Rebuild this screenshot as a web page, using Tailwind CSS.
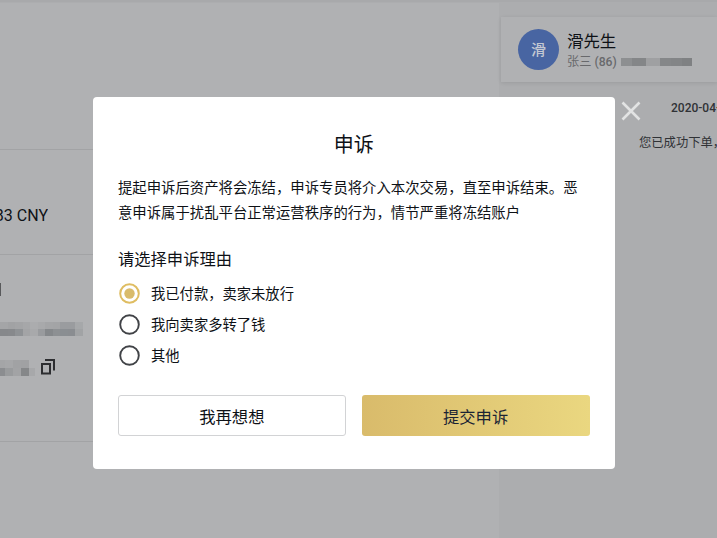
<!DOCTYPE html>
<html lang="zh-CN">
<head>
    <meta charset="UTF-8">
    <meta name="viewport" content="width=device-width, initial-scale=1.0">
    <title>申诉</title>
    <script src="https://cdn.jsdelivr.net/npm/@tailwindcss/browser@4"></script>
    <style>
        body { font-family: Roboto, 'Noto Sans CJK SC', sans-serif; }
    </style>
</head>
<body class="relative w-[717px] h-[538px] overflow-hidden bg-[#b0b1b3] text-[#0e1116]">

    <div class="flex flex-col h-full">
        <div class="h-[3px] shrink-0 bg-[#a8a9ab] border-b border-[#acadaf]"></div>
        <div class="flex flex-1">
            <!-- 订单信息 -->
            <main class="w-[499px] shrink-0">
                <div class="h-[147px] border-b border-[#a2a3a5]"></div>
                <div class="h-[105px] border-b border-[#a2a3a5] flex pt-[54px]">
                    <div class="w-[48px] h-6 flex justify-end text-[16px] leading-6 whitespace-nowrap overflow-hidden">83 CNY</div>
                </div>
                <div class="h-[187px] border-b border-[#a2a3a5] flex flex-col">
                    <div class="mt-[28px] w-px h-[13px] bg-[#58595b]"></div>
                    <div id="account" class="mt-[26px] grid grid-cols-[repeat(11,7.5px)] w-[83px] h-[14px]"></div>
                    <div class="mt-[21px] flex items-start">
                        <div id="card" class="mt-[3px] grid grid-cols-[5px_8px_8px_8px_6px] w-[39px] h-[16px]"></div>
                        <svg width="17" height="18" viewBox="0 0 17 18" fill="none" stroke="#2d2e31" stroke-width="2">
                            <path d="M3 7h8v9.500H3zM6 3h9v10.500"/>
                        </svg>
                    </div>
                </div>
            </main>

            <!-- 聊天 -->
            <aside class="flex-1 min-w-0 bg-[#acadaf] pt-[14px]">
                <div class="ml-[2px] h-[65px] bg-[#b0b1b3] shadow-[0_1px_4px_rgba(0,0,0,0.1)] flex items-center pl-[17px]">
                    <div class="w-[41px] h-[41px] shrink-0 rounded-full bg-[#4865a2] text-[#c3c8d2] text-[15px] font-medium flex items-center justify-center pt-[2px]">滑</div>
                    <div class="ml-[8px] pt-[4px] whitespace-nowrap">
                        <div class="text-[16.4px] leading-[21px]">滑先生</div>
                        <div class="flex items-center text-[12.2px] leading-[20px] text-[#68696c]">
                            <span>张三 <b class="font-medium">(86)</b></span>
                            <div id="phone" class="ml-[4px] grid grid-cols-[11px_14px_14px_11px_11px_10px] h-[8px]"></div>
                        </div>
                    </div>
                </div>
                <div class="pt-[17px] pl-[172px] text-[12px] leading-[18px] font-medium text-[#303236] whitespace-nowrap">2020-04-</div>
                <div class="pt-[16px] pl-[140px] text-[12.3px] leading-[20px] text-[#303236] whitespace-nowrap">您已成功下单，</div>
            </aside>
        </div>
    </div>

    <!-- 申诉弹窗 -->
    <div class="absolute left-[93px] top-[97px] w-[521.5px] h-[372px] bg-white rounded-[4px] px-[25px] pt-[33px]">
        <svg class="absolute left-[528px] top-[4px]" width="20" height="20" viewBox="0 0 20 20" stroke="#e2e3e3" stroke-width="2.6">
            <path d="M1.500 1.500l17 17M18.500 1.500l-17 17"/>
        </svg>
        <h1 class="text-center text-[20px] leading-[30px]">申诉</h1>
        <p class="mt-[15.5px] text-[14.36px] leading-[25px] whitespace-nowrap">提起申诉后资产将会冻结，申诉专员将介入本次交易，直至申诉结束。恶<br>意申诉属于扰乱平台正常运营秩序的行为，情节严重将冻结账户</p>
        <h2 class="mt-[22px] text-[16.3px] leading-[24px]">请选择申诉理由</h2>
        <div class="mt-[6.5px] text-[14.3px]">
            <div class="h-[31px] flex items-center gap-[11px]">
                <svg class="ml-px" width="21" height="21" viewBox="0 0 21 21" fill="none">
                    <circle cx="10.500" cy="10.500" r="9.300" stroke="#dfbd62" stroke-width="2"/>
                    <circle cx="10.500" cy="10.500" r="5.200" fill="#d9bb6b"/>
                </svg>
                <span class="pt-[2px]">我已付款，卖家未放行</span>
            </div>
            <div class="h-[31px] flex items-center gap-[11px]">
                <svg class="ml-px" width="21" height="21" viewBox="0 0 21 21" fill="none"><circle cx="10.500" cy="10.500" r="9.300" stroke="#414347" stroke-width="1.900"/></svg>
                <span class="pt-[2px]">我向卖家多转了钱</span>
            </div>
            <div class="h-[31px] flex items-center gap-[11px]">
                <svg class="ml-px" width="21" height="21" viewBox="0 0 21 21" fill="none"><circle cx="10.500" cy="10.500" r="9.300" stroke="#414347" stroke-width="1.900"/></svg>
                <span class="pt-[2px]">其他</span>
            </div>
        </div>
        <div class="mt-[24px] grid grid-cols-2 gap-[16px] text-[16.3px]">
            <button class="h-[41px] pt-[5px] rounded-[3px] border border-[#d2d3d5]">我再想想</button>
            <button class="h-[41px] pt-[5px] rounded-[3px] bg-linear-to-r from-[#d9bb6b] to-[#ead780] text-[#1a2334]">提交申诉</button>
        </div>
    </div>

    <script>
        // 打码色块，每行一组
        const mosaics = {
            account: [
                ['#a4a5a7','#a1a2a4','#a3a4a6','#a6a7a9','#abacae','#a8a9ab','#a4a5a7','#a3a4a6','#9a9c9f','#9a9c9f','#a6a8aa'],
                ['#86888b','#87898c','#8f9295','#a3a4a6','#a8a9ab','#999b9e','#85888b','#8d9093','#8a8e92','#8a8d91','#a1a3a5'],
            ],
            card: [
                ['#a4a5a7','#a6a7a9','#a1a2a4','#a0a1a3','#b0b1b3'],
                ['#8b8d90','#999b9d','#a2a3a5','#858789','#a7a8aa'],
            ],
            phone: [
                ['#8d8f91','#848688','#9fa0a2','#858789','#838587','#7f8183'],
            ],
        };

        Object.entries(mosaics).forEach(([id, rows]) => {
            const box = document.getElementById(id);
            rows.flat().forEach(color => {
                const cell = document.createElement('div');
                cell.style.background = color;
                box.appendChild(cell);
            });
        });
    </script>
</body>
</html>
